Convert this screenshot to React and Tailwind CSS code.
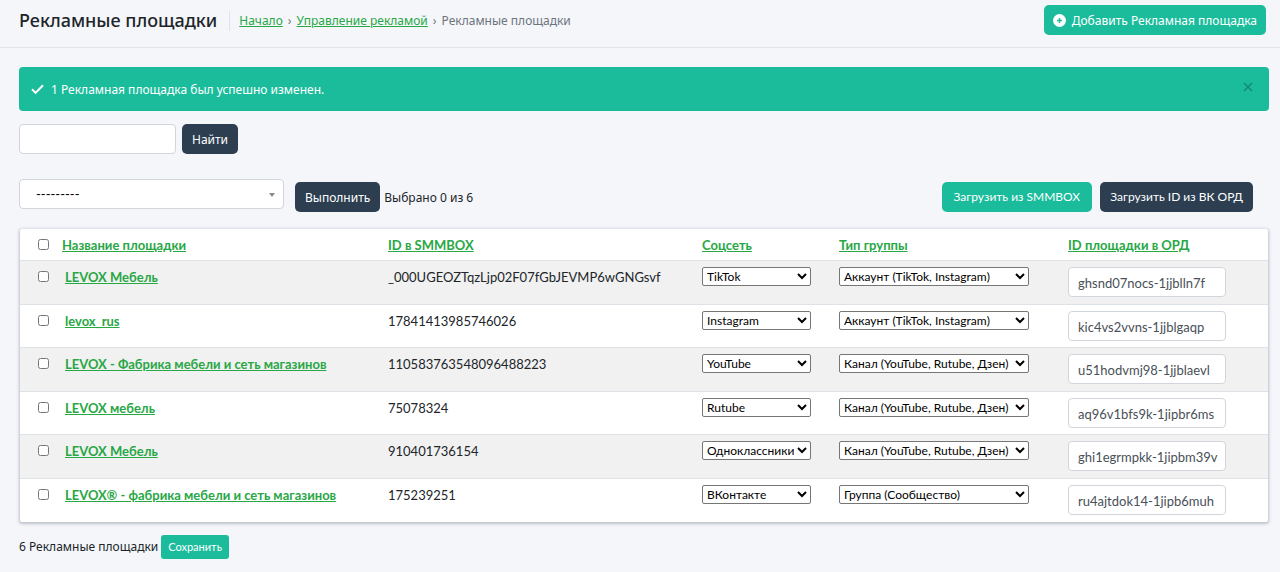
import React from "react";

const SOCIALS = ["TikTok", "Instagram", "YouTube", "Rutube", "Одноклассники", "ВКонтакте"];
const TYPES = [
  "Аккаунт (TikTok, Instagram)",
  "Канал (YouTube, Rutube, Дзен)",
  "Группа (Сообщество)",
];

const ROWS = [
  { name: "LEVOX Мебель", id: "_000UGEOZTqzLjp02F07fGbJEVMP6wGNGsvf", social: 0, type: 0, ord: "ghsnd07nocs-1jjblln7f" },
  { name: "levox_rus", id: "17841413985746026", social: 1, type: 0, ord: "kic4vs2vvns-1jjblgaqp" },
  { name: "LEVOX - Фабрика мебели и сеть магазинов", id: "110583763548096488223", social: 2, type: 1, ord: "u51hodvmj98-1jjblaevl" },
  { name: "LEVOX мебель", id: "75078324", social: 3, type: 1, ord: "aq96v1bfs9k-1jipbr6ms" },
  { name: "LEVOX Мебель", id: "910401736154", social: 4, type: 1, ord: "ghi1egrmpkk-1jipbm39v" },
  { name: "LEVOX® - фабрика мебели и сеть магазинов", id: "175239251", social: 5, type: 2, ord: "ru4ajtdok14-1jipb6muh" },
];

const COLUMNS = ["Название площадки", "ID в SMMBOX", "Соцсеть", "Тип группы", "ID площадки в ОРД"];

const link = "text-[#28a745] underline";
const cyrillic = "font-['Noto_Sans','Open_Sans',sans-serif] text-[12px]";
const button = "h-[30px] rounded-[5px] text-[12px] text-white whitespace-nowrap";
const field = "h-[30px] rounded border border-[#d1d5dc] bg-white text-[#495057]";

function CellSelect({ label, options, value, width }) {
  return (
    <select
      aria-label={label}
      defaultValue={options[value]}
      className={`block h-[19px] rounded-[2px] border border-[#767676] bg-white text-[12px] text-black ${width}`}
    >
      {options.map((option) => (
        <option key={option}>{option}</option>
      ))}
    </select>
  );
}

export default function App() {
  return (
    <div className="min-h-screen bg-[#f4f6fa] font-['Lato','Open_Sans',sans-serif] text-[13px] leading-5 text-[#212529]">
      <header className="flex items-start justify-between border-b border-[#e1e4e9] pr-[14px] pl-[19px]">
        <div className="flex items-center pt-[9px] pb-[15px]">
          <h1 className="pr-3 font-['Noto_Sans','Open_Sans',sans-serif] text-lg leading-[23px] font-medium">Рекламные площадки</h1>
          <nav aria-label="Навигация" className={`${cyrillic} flex gap-[5px] border-l border-[#dfe2e8] pl-[9px] text-[#6c757d]`}>
            <a href="#" className={link}>Начало</a>
            <span>›</span>
            <a href="#" className={link}>Управление рекламой</a>
            <span>›</span>
            <span>Рекламные площадки</span>
          </nav>
        </div>
        <button type="button" className={`${button} ${cyrillic} mt-[5px] flex items-center gap-[6px] bg-[#1abc9c] px-[9px] pt-px`}>
          <svg viewBox="0 0 13 13" className="size-[13px]" aria-hidden="true">
            <circle cx="6.5" cy="6.5" r="6.5" fill="#ffffff" />
            <path d="M6.5 4v5M4 6.500h5" stroke="#1abc9c" strokeWidth="1.4" />
          </svg>
          Добавить Рекламная площадка
        </button>
      </header>

      <main className="pt-[19px] pr-[11px] pl-[19px]">
        <div role="status" className={`${cyrillic} flex h-11 items-center rounded bg-[#1abc9c] pt-px pr-4 pl-3 text-white`}>
          <svg viewBox="0 0 13 13" className="mr-[7px] size-[13px]" fill="none" stroke="currentColor" strokeWidth="2" aria-hidden="true">
            <path d="M1 6.300l3.600 3.600L12 2.300" />
          </svg>
          <span className="grow">1 Рекламная площадка был успешно изменен.</span>
          <button type="button" aria-label="Закрыть" className="pb-[5px] text-[#128770]">
            <svg viewBox="0 0 10 10" className="size-[10px]" fill="none" stroke="currentColor" strokeWidth="1.2">
              <path d="M1 1l8 8M9 1l-8 8" />
            </svg>
          </button>
        </div>

        <form className="mt-[13px] flex gap-[6px]" onSubmit={(event) => event.preventDefault()}>
          <input type="text" aria-label="Поиск" className={`${field} w-[157px] px-[9px]`} />
          <button type="submit" className={`${button} ${cyrillic} bg-[#2c3e50] px-[10px] pt-px`}>Найти</button>
        </form>

        <div className="mt-[25px] mb-[17px] flex items-start">
          <div className="relative mr-[11px] w-[265px]">
            <select aria-label="Действие" className={`${field} w-full appearance-none pl-4 text-black`}>
              <option>---------</option>
            </select>
            <svg viewBox="0 0 6 4" className="pointer-events-none absolute top-[14px] right-[9px] h-1 w-[6px]" fill="#888888" aria-hidden="true">
              <path d="M0 0h6L3 4z" />
            </svg>
          </div>
          <div className="mt-[3px] flex grow items-center pr-4">
            <button type="button" className={`${button} ${cyrillic} bg-[#2c3e50] px-[10px] pt-px`}>Выполнить</button>
            <span className={`${cyrillic} ml-1 grow pt-px`}>Выбрано 0 из 6</span>
            <button type="button" className={`${button} mr-2 bg-[#1abc9c] px-3`}>Загрузить из SMMBOX</button>
            <button type="button" className={`${button} bg-[#2c3e50] px-[10px]`}>Загрузить ID из ВК ОРД</button>
          </div>
        </div>

        <div className="mx-px rounded-[2px] bg-white shadow-[0_1px_3px_1px_rgba(60,70,85,0.3)]">
          <table className="w-full table-fixed border-separate border-spacing-0 text-left">
            <colgroup>
              <col className="w-[32px]" />
              <col className="w-[326px]" />
              <col className="w-[314px]" />
              <col className="w-[137px]" />
              <col className="w-[229px]" />
              <col className="w-[210px]" />
            </colgroup>
            <thead>
              <tr className="h-8">
                <th className="border-b border-[#dee2e6] pl-[18px]">
                  <input type="checkbox" aria-label="Выбрать все" className="block size-[11px]" />
                </th>
                {COLUMNS.map((column) => (
                  <th key={column} className="border-b border-[#dee2e6] pl-[10px] font-bold">
                    <a href="#" className={link}>{column}</a>
                  </th>
                ))}
              </tr>
            </thead>
            <tbody>
              {ROWS.map((row) => (
                <tr
                  key={row.ord}
                  className="align-top odd:h-11 odd:bg-[#f1f1f1] even:h-[43px] [&>*]:border-b [&>*]:border-[#dee2e6] [&>td]:pl-[10px] [&:last-child>*]:border-b-0"
                >
                  <td>
                    <input type="checkbox" aria-label={`Выбрать ${row.name}`} className="mt-[10px] ml-2 block size-[11px]" />
                  </td>
                  <th scope="row" className="pt-[6px] pl-[13px] font-bold">
                    <a href="#" className={link}>{row.name}</a>
                  </th>
                  <td className="pt-[6px]">{row.id}</td>
                  <td className="pt-[6px]">
                    <CellSelect label="Соцсеть" options={SOCIALS} value={row.social} width="w-[109px]" />
                  </td>
                  <td className="pt-[6px]">
                    <CellSelect label="Тип группы" options={TYPES} value={row.type} width="w-[190px]" />
                  </td>
                  <td className="pt-[6px]">
                    <input type="text" aria-label="ID площадки в ОРД" defaultValue={row.ord} className={`${field} block w-[158px] pt-[2px] pr-1 pl-[9px]`} />
                  </td>
                </tr>
              ))}
            </tbody>
          </table>
        </div>

        <div className="flex items-center gap-[3px] pt-[13px] pb-3">
          <span className={cyrillic}>6 Рекламные площадки</span>
          <button type="submit" className="h-6 rounded-[3px] bg-[#1abc9c] px-[7px] text-[11px] text-white">Сохранить</button>
        </div>
      </main>
    </div>
  );
}
